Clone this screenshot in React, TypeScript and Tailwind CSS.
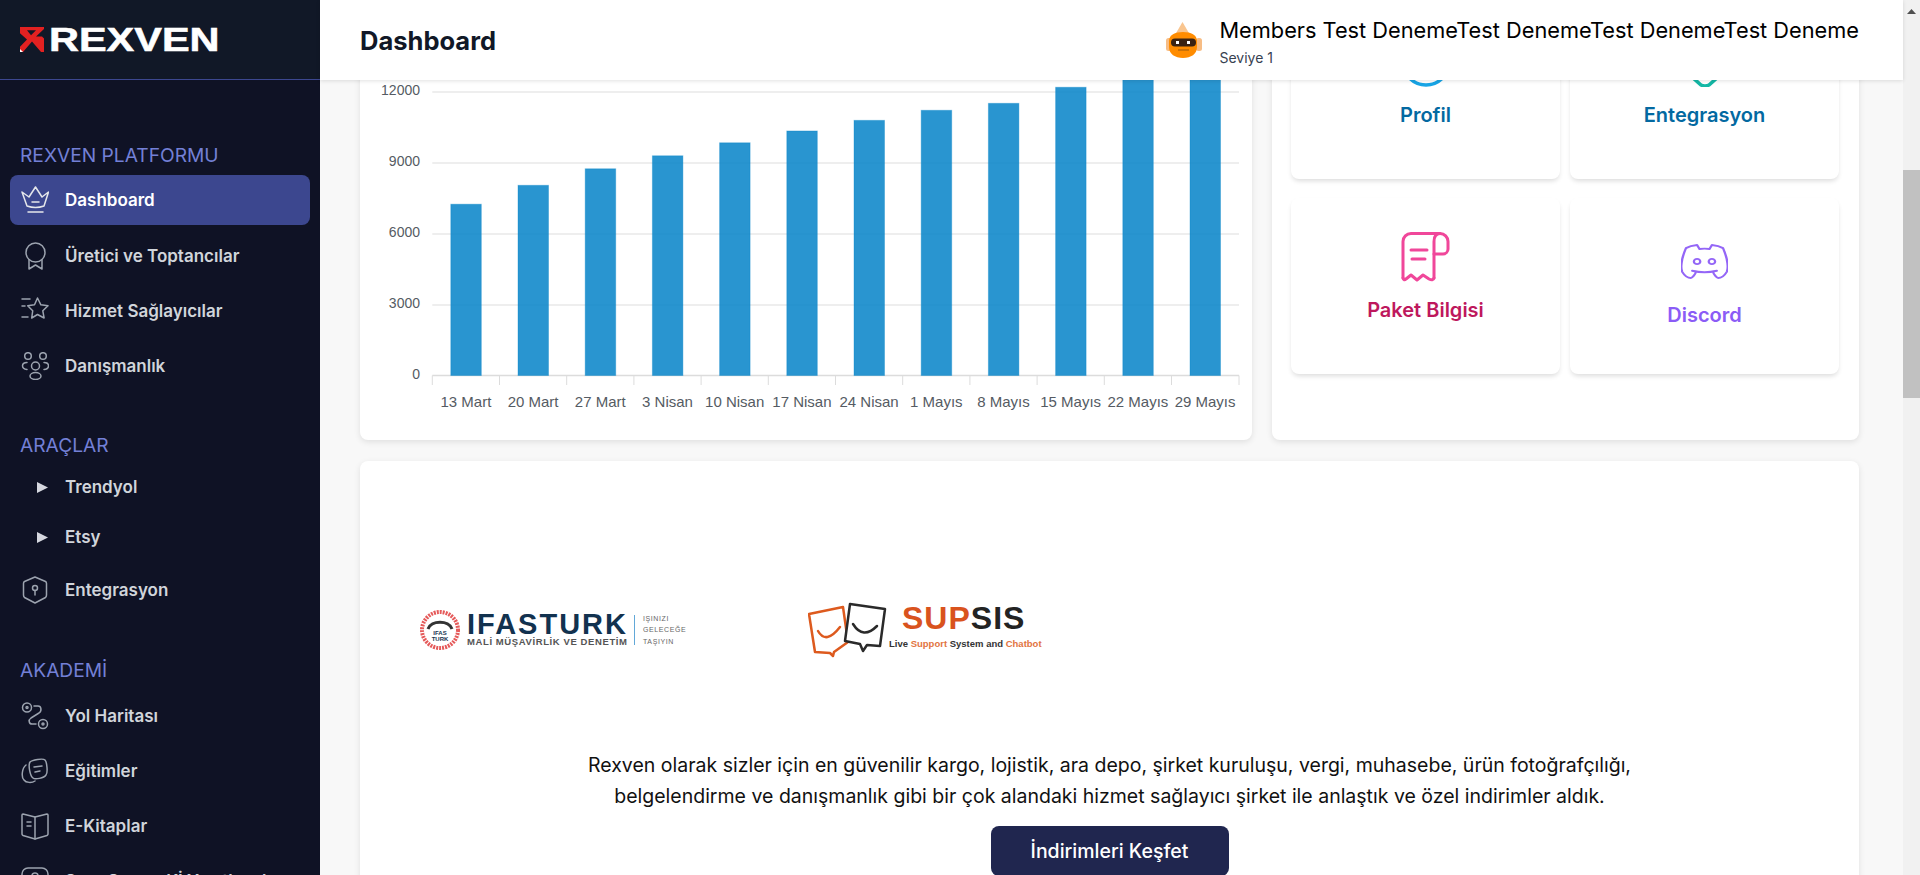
const bars = [
  { label: '13 Mart', value: 7250 },
  { label: '20 Mart', value: 8050 },
  { label: '27 Mart', value: 8750 },
  { label: '3 Nisan', value: 9300 },
  { label: '10 Nisan', value: 9850 },
  { label: '17 Nisan', value: 10350 },
  { label: '24 Nisan', value: 10800 },
  { label: '1 Mayıs', value: 11225 },
  { label: '8 Mayıs', value: 11520 },
  { label: '15 Mayıs', value: 12200 },
  { label: '22 Mayıs', value: 12800 },
  { label: '29 Mayıs', value: 13300 },
];

const strokeIcon = {
  fill: 'none',
  stroke: 'currentColor',
  strokeWidth: 1.5,
  strokeLinecap: 'round' as const,
  strokeLinejoin: 'round' as const,
};

const Crown = () => (
  <svg width="28" height="28" viewBox="0 0 28 28" {...strokeIcon}>
    <path d="M1 6l7 5 6.500-10L21 11l6.500-5L23 20q-8.500 3-17 0z" />
    <path d="M11 16h7M7 26h15" />
  </svg>
);
const Ribbon = () => (
  <svg width="28" height="28" viewBox="0 0 28 28" {...strokeIcon}>
    <circle cx="14.500" cy="10.500" r="9.500" />
    <path d="M8 18v9l6.500-4 6.500 4v-9" />
  </svg>
);
const Stars = () => (
  <svg width="28" height="28" viewBox="0 0 28 28" {...strokeIcon}>
    <path d="M16.500 1l3.400 6.800 7.100 1-5.200 5 1.300 7.200-6.600-3.500-5.800 3.500 1-7.200-5-5 6.800-1z" />
    <path d="M1 2h8M1 9h3M1 20h6" />
  </svg>
);
const Group = () => (
  <svg width="28" height="28" viewBox="0 0 28 28" {...strokeIcon}>
    <circle cx="7" cy="4" r="3.300" />
    <circle cx="22" cy="4" r="3.300" />
    <circle cx="14.500" cy="14" r="4" />
    <path d="M6 10.500c-6 0-6 6.500 0 7M23 10.500c6 0 6 6.500 0 7" />
    <ellipse cx="14.500" cy="24" rx="5.500" ry="3.500" />
  </svg>
);
const ShieldPin = () => (
  <svg width="28" height="28" viewBox="0 0 28 28" {...strokeIcon}>
    <path d="M14 1l10.500 4.500c1 .500 1 1 1 2V19c0 1-.500 2-1 2.500L14 27 3.500 21.500c-.500-.500-1-1.500-1-2.500V7.500c0-1 0-1.500 1-2z" />
    <circle cx="14" cy="12" r="2.500" />
    <path d="M14 14.500V19" />
  </svg>
);
const RoadMap = () => (
  <svg width="28" height="28" viewBox="0 0 28 28" {...strokeIcon}>
    <circle cx="6" cy="5.500" r="4.500" />
    <circle cx="6" cy="5.500" r="1" />
    <circle cx="22" cy="22" r="4.500" />
    <circle cx="22" cy="22" r="1" />
    <path d="M13 4h4c3.500 0 4 5 1 7l-8 5c-3 2-2 6 1 6h4" />
  </svg>
);
const Courses = () => (
  <svg width="28" height="28" viewBox="0 0 28 28" {...strokeIcon}>
    <path d="M9 5c2-2 13-4 15-2 2 2 3 13 1 15-2 3-11 5-13 3-3-2-5-13-3-16z" />
    <path d="M5 8C1 11 0 20 3 23c2 3 8 3 11 1" />
    <path d="M13 10l8-1M14 15l5-1" />
  </svg>
);
const Book = () => (
  <svg width="28" height="28" viewBox="0 0 28 28" {...strokeIcon}>
    <path d="M14 5L2 2c-1 0-1 .500-1 1v19c0 1 .500 1 1 1.500L14 27l12-3.500c.500-.500 1-.500 1-1.500V3c0-.500 0-1-1-1z" />
    <path d="M14 5v22M6 10h4M6 14h4" />
  </svg>
);
const Chat = () => (
  <svg width="28" height="28" viewBox="0 0 28 28" {...strokeIcon}>
    <rect x="1" y="1" width="26" height="24" rx="6" />
    <circle cx="14" cy="9" r="3" />
  </svg>
);

const Play = () => (
  <span className="flex w-7 justify-end pr-px text-[#d5d7df]">
    <svg width="11" height="11" viewBox="0 0 11 11" fill="currentColor">
      <path d="M0 0l11 5.500L0 11z" />
    </svg>
  </span>
);

function NavItem({ icon, label, active, h = 'h-[50px]' }: { icon: React.ReactNode; label: string; active?: boolean; h?: string }) {
  return (
    <div
      className={`mx-[10px] flex ${h} shrink-0 items-center gap-4 rounded-lg pl-[11px] text-[17px] font-semibold ${
        active ? 'bg-[#3c478f] text-white' : 'text-[#d1d5db]'
      }`}
    >
      <span className={`flex w-7 shrink-0 justify-center ${active ? 'text-[#e5e7eb]' : 'text-[#9ca3af]'}`}>{icon}</span>
      <span className="pt-0.5 whitespace-nowrap">{label}</span>
    </div>
  );
}

const SectionTitle = ({ children, className }: { children: string; className: string }) => (
  <div className={`shrink-0 px-5 text-[19.200px] leading-6 text-[#7380d6] ${className}`}>{children}</div>
);

function Sidebar() {
  return (
    <aside className="flex h-full w-80 shrink-0 flex-col overflow-hidden bg-[#0f1225] font-['Inter',sans-serif]">
      <div className="flex h-20 shrink-0 items-center gap-[5px] border-b border-[#3c478f] bg-[#111827] pb-[1px] pl-5">
        <svg width="24" height="25" viewBox="0 0 24 24" preserveAspectRatio="none" className="shrink-0">
          <path d="M0 0H24V2L16 9H22L24 11V24H21L12 14L3 24H0V19L7 12L0 6Z" fill="#e32121" />
          <path d="M7 3H16L11 8Z" fill="#111827" />
          <path d="M0 24V21L3 24Z" fill="#ffffff" />
        </svg>
        <span className="inline-block origin-left scale-x-[1.22] font-['Liberation_Sans',sans-serif] text-[34px] leading-none font-bold text-white [-webkit-text-stroke:0.6px_white]">
          REXVEN
        </span>
      </div>
      <SectionTitle className="mt-[63px] mb-[8px]">REXVEN PLATFORMU</SectionTitle>
      <NavItem active icon={<Crown />} label="Dashboard" />
      <div className="h-[3px] shrink-0" />
      <NavItem icon={<Ribbon />} label="Üretici ve Toptancılar" h="h-[55px]" />
      <NavItem icon={<Stars />} label="Hizmet Sağlayıcılar" h="h-[55px]" />
      <NavItem icon={<Group />} label="Danışmanlık" h="h-[55px]" />
      <SectionTitle className="mt-[40px] mb-[5px]">ARAÇLAR</SectionTitle>
      <NavItem icon={<Play />} label="Trendyol" />
      <NavItem icon={<Play />} label="Etsy" />
      <NavItem icon={<ShieldPin />} label="Entegrasyon" h="h-[56px]" />
      <SectionTitle className="mt-[40px] mb-[6px]">AKADEMİ</SectionTitle>
      <NavItem icon={<RoadMap />} label="Yol Haritası" h="h-[55px]" />
      <NavItem icon={<Courses />} label="Eğitimler" h="h-[55px]" />
      <NavItem icon={<Book />} label="E-Kitaplar" h="h-[55px]" />
      <NavItem icon={<Chat />} label="Soru Sorun, Kİ Yanıtlayalım" h="h-[55px]" />
    </aside>
  );
}

const RobotAvatar = () => (
  <svg width="36" height="36" viewBox="0 0 36 36" className="shrink-0">
    <path d="M16.500 0l7 12h-14z" fill="#f9c58f" />
    <rect x="0" y="16" width="6" height="13" rx="2.500" fill="#f7bd85" />
    <rect x="30" y="16" width="6" height="13" rx="2.500" fill="#f7bd85" />
    <path d="M3 19C3 13 9 10 17 10s14 3 14 9v6c0 7-6 11-14 11S3 32 3 25z" fill="#ff8c00" />
    <rect x="5" y="16.500" width="25" height="8" rx="4" fill="#3a2212" />
    <rect x="10" y="19" width="3" height="3" fill="#fff" />
    <rect x="21" y="19" width="3" height="3" fill="#fff" />
    <path d="M12 28h11" stroke="#a8620f" strokeWidth="1.200" />
  </svg>
);

function Header() {
  return (
    <header className="relative z-10 flex h-20 shrink-0 items-center justify-between bg-white pr-11 pl-10 shadow-[0_1px_4px_rgba(0,0,0,0.12)]">
      <h1 className="pt-0.5 font-['Inter',sans-serif] text-[25.500px] font-bold text-[#111827]">Dashboard</h1>
      <div className="flex items-center gap-[17px]">
        <RobotAvatar />
        <div className="pt-1 font-['Inter',sans-serif] text-black">
          <div className="text-[21.760px] leading-7 whitespace-nowrap">Members Test DenemeTest DenemeTest DenemeTest Deneme</div>
          <div className="mt-1 text-[14px] leading-5 text-[#374151]">Seviye 1</div>
        </div>
      </div>
    </header>
  );
}

const yTicks = [
  { label: '12000', y: 92 },
  { label: '9000', y: 163 },
  { label: '6000', y: 234 },
  { label: '3000', y: 305 },
  { label: '0', y: 375.500 },
];

function Chart() {
  // svg origin is the card's top-left at (360, -20)
  const ox = 360;
  const oy = -20;
  const zero = 375.500;
  const left = 432.300;
  const step = 67.200;
  return (
    <svg width="892" height="460" className="block">
      <g transform={`translate(${-ox} ${-oy})`} fontFamily="'Liberation Sans', sans-serif">
        {yTicks.map((t) => (
          <line key={t.label} x1={left} x2="1239" y1={t.y} y2={t.y} stroke={t.label === '0' ? '#dcdcdc' : '#e8e8e8'} strokeWidth="1.500" />
        ))}
        {yTicks.map((t) => (
          <text key={t.label} x="420" y={t.y + 3} textAnchor="end" fontSize="14" fill="#555b63">
            {t.label}
          </text>
        ))}
        {bars.map((b, i) => {
          const x = left + step * i;
          const top = zero - (b.value * (zero - 92)) / 12000;
          return (
            <g key={b.label}>
              <line x1={x} x2={x} y1={zero} y2="385" stroke="#dcdcdc" />
              <rect x={x + 18.500} y={top} width="30.500" height={zero - top} fill="#0383c8" fillOpacity="0.85" stroke="#0383c8" strokeOpacity="0.35" strokeWidth="1" />
              <text x={x + 33.600} y="407" textAnchor="middle" fontSize="15" fill="#555b63">
                {b.label}
              </text>
            </g>
          );
        })}
        <line x1="1239" x2="1239" y1={zero} y2="385" stroke="#dcdcdc" />
      </g>
    </svg>
  );
}

function Shortcut({ icon, label, color, pad }: { icon: React.ReactNode; label: string; color: string; pad: string }) {
  return (
    <div className={`flex h-[176px] flex-col items-center rounded-lg bg-white shadow-[0_3px_5px_-1px_rgba(0,0,0,0.14)] ${pad}`}>
      {icon}
      <div className={`font-['Inter',sans-serif] text-[20px] leading-7 font-semibold ${color}`}>{label}</div>
    </div>
  );
}

function QuickLinks() {
  return (
    <div className="grid grid-cols-2 gap-x-[10px] gap-y-[19px] pt-[23px] pr-5 pl-[19px]">
      <Shortcut
        label="Profil"
        color="text-[#0369a1]"
        pad="pt-[34px]"
        icon={
          <svg width="50" height="50" viewBox="0 0 50 50" fill="none" stroke="#18a5e6" strokeWidth="3.500" className="mb-[14px]">
            <circle cx="25" cy="25" r="23" />
          </svg>
        }
      />
      <Shortcut
        label="Entegrasyon"
        color="text-[#0369a1]"
        pad="pt-[34px]"
        icon={
          <svg width="50" height="50" viewBox="0 0 50 50" fill="none" stroke="#14b8a6" strokeWidth="3.500" className="mb-[14px]">
            <path d="M5 8h40v20Q45 36 38 40L29 48Q25 50 21 48L12 40Q5 36 5 28z" />
          </svg>
        }
      />
      <Shortcut
        label="Paket Bilgisi"
        color="text-[#be185d]"
        pad="pt-[34px]"
        icon={
          <svg width="49" height="50" viewBox="0 0 49 50" fill="none" stroke="#f0479a" strokeWidth="3" strokeLinecap="round" strokeLinejoin="round" className="mb-[14px]">
            <path d="M2 46V9.500a8 8 0 0 1 8-8H39a8 8 0 0 1 8 8V17a5 5 0 0 1-5 5H33" />
            <path d="M39 1.500C35 1.500 33 4 33 9.500V46" />
            <path d="M2 46Q3 49 5 47L10 43L16 48L22 43L28 47Q32 49 33 46" />
            <path d="M10 18H26M11 27H24" />
          </svg>
        }
      />
      <Shortcut
        label="Discord"
        color="text-[#8b5cf6]"
        pad="pt-[46px]"
        icon={
          <svg width="47" height="35" viewBox="2.500 3.500 19 17" preserveAspectRatio="none" fill="none" stroke="#9466f7" strokeWidth="0.900" strokeLinecap="round" strokeLinejoin="round" className="mb-[22px]">
            <circle cx="9" cy="12" r="1.300" />
            <circle cx="15" cy="12" r="1.300" />
            <path d="M15.500 17c0 1 1.500 3 2 3c1.500 0 2.833 -1.667 3.500 -3c.667 -1.667 .500 -5.833 -1.500 -11.500c-1.457 -1.015 -3 -1.340 -4.500 -1.500l-.972 1.923a11.913 11.913 0 0 0 -4.053 0l-.975 -1.923c-1.500 .160 -3.043 .485 -4.500 1.500c-2 5.667 -2.167 9.833 -1.500 11.500c.667 1.333 2 3 3.500 3c.500 0 2 -2 2 -3" />
            <path d="M7 16.500c3.500 1 6.500 1 10 0" />
          </svg>
        }
      />
    </div>
  );
}

const IfasturkLogo = () => (
  <div className="flex w-[388px] shrink-0 items-center">
    <svg width="40" height="40" viewBox="0 0 40 40" className="shrink-0">
      <circle cx="20" cy="20" r="18" fill="#fff" stroke="#e55a5a" strokeWidth="4" strokeDasharray="2 1" />
      <path d="M8 19c3-9 21-9 24 0" fill="none" stroke="#333" strokeWidth="3" />
      <text x="20" y="25" textAnchor="middle" fontSize="6" fontWeight="700" fill="#16324f" fontFamily="'Liberation Sans', sans-serif">IFAS</text>
      <text x="20" y="31" textAnchor="middle" fontSize="6" fontWeight="700" fill="#16324f" fontFamily="'Liberation Sans', sans-serif">TURK</text>
    </svg>
    <div className="ml-[7px] w-[159px] font-['Liberation_Sans',sans-serif]">
      <div className="text-[29px] leading-[23px] font-bold tracking-[2px] text-[#12324f]">IFASTURK</div>
      <div className="mt-px text-[9.500px] leading-[10px] font-bold tracking-[0.6px] whitespace-nowrap text-[#555]">MALİ MÜŞAVİRLİK VE DENETİM</div>
    </div>
    <div className="mx-2 h-[30px] w-px shrink-0 bg-[#62a8d8]" />
    <div className="font-['Liberation_Sans',sans-serif] text-[7px] leading-[11.500px] tracking-[0.6px] whitespace-nowrap text-[#666]">
      <div>IŞINIZI</div>
      <div>GELECEĞE</div>
      <div>TAŞIYIN</div>
    </div>
  </div>
);

const SupsisLogo = () => (
  <div className="flex items-center">
    <svg width="80" height="56" viewBox="0 0 80 56" fill="none" strokeLinecap="round" strokeLinejoin="round" className="shrink-0">
      <path d="M1 12L35 5 40 40 26 50l-1 4-3-3L7 50z" stroke="#dd5a1e" strokeWidth="2.500" />
      <path d="M10 29Q18 43 32 25" stroke="#dd5a1e" strokeWidth="2.500" />
      <path d="M42 2L77 7 72 44 59 43l-4 6-3-7-15-3z" stroke="#2a2a2a" strokeWidth="2.500" fill="#fff" />
      <path d="M45 22Q55 38 69 24" stroke="#2a2a2a" strokeWidth="2.500" />
    </svg>
    <div className="-mt-[6px] ml-px font-['Liberation_Sans',sans-serif]">
      <div className="mb-[6px] pl-[13px] text-[32px] leading-[28px] font-bold tracking-[1px] text-[#d9531e]">
        SUP<span className="text-[#232323]">SIS</span>
      </div>
      <div className="text-[9.500px] leading-3 font-semibold whitespace-nowrap text-[#333]">
        Live <span className="text-[#e2743f]">Support</span> System and <span className="text-[#e2743f]">Chatbot</span>
      </div>
    </div>
  </div>
);

function Content() {
  return (
    <div className="flex min-h-0 flex-1 flex-col gap-[21px] overflow-hidden bg-[#f8f8f8] pr-11 pl-10">
      <div className="-mt-[100px] grid shrink-0 grid-cols-[892px_587px] gap-5">
        <div className="rounded-lg bg-white shadow-[0_2px_6px_rgba(0,0,0,0.1)]">
          <Chart />
        </div>
        <div className="rounded-lg bg-white shadow-[0_2px_6px_rgba(0,0,0,0.1)]">
          <QuickLinks />
        </div>
      </div>
      <div className="flex shrink-0 flex-col items-center rounded-lg bg-white pb-10 shadow-[0_2px_6px_rgba(0,0,0,0.1)]">
        <div className="flex h-[289px] w-full items-center pt-[49px] pl-[60px]">
          <IfasturkLogo />
          <SupsisLogo />
        </div>
        <p className="text-center font-['Inter',sans-serif] text-[19.500px] leading-[31px] text-[#111]">
          Rexven olarak sizler için en güvenilir kargo, lojistik, ara depo, şirket kuruluşu, vergi, muhasebe, ürün fotoğrafçılığı,
          <br />
          belgelendirme ve danışmanlık gibi bir çok alandaki hizmet sağlayıcı şirket ile anlaştık ve özel indirimler aldık.
        </p>
        <button className="mt-[14px] h-[50px] w-[238px] rounded-lg bg-[#20264f] pt-0.5 font-['Inter',sans-serif] text-[19.500px] font-medium text-white">
          İndirimleri Keşfet
        </button>
      </div>
    </div>
  );
}

export default function App() {
  return (
    <div className="flex h-screen w-full overflow-hidden bg-[#f8f8f8]">
      <Sidebar />
      <main className="flex h-full min-w-0 flex-1 flex-col">
        <Header />
        <Content />
      </main>
      {/* page scrollbar */}
      <div className="flex h-full w-[17px] shrink-0 flex-col items-center bg-[#f1f1f1]">
        <svg width="9" height="5" viewBox="0 0 9 5" fill="#505050" className="mt-[9px] shrink-0">
          <path d="M4.500 0L9 5H0z" />
        </svg>
        <div className="mt-[156px] h-[228px] w-full shrink-0 bg-[#c1c1c1]" />
      </div>
    </div>
  );
}
